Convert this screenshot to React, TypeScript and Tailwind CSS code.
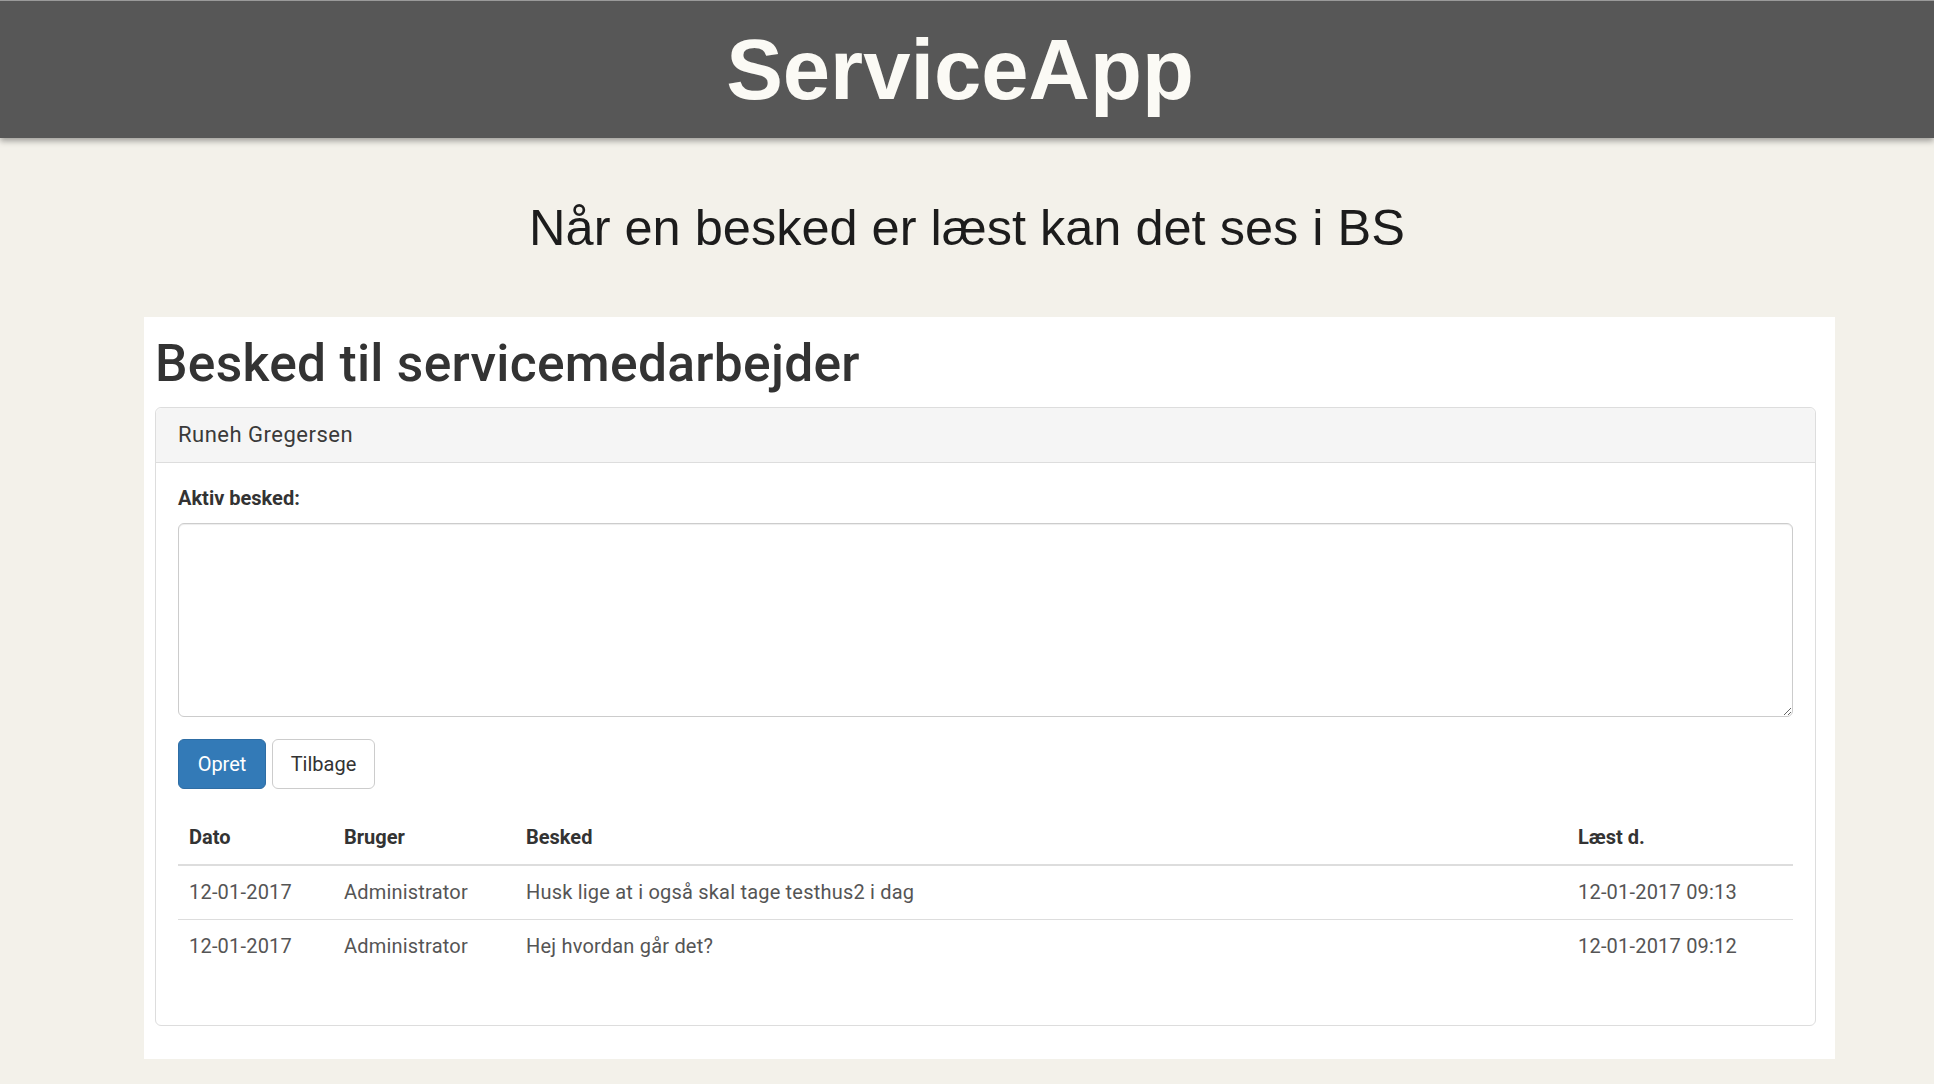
import React from 'react';

interface Message {
  date: string;
  user: string;
  text: string;
  readAt: string;
}

const messages: Message[] = [
  { date: '12-01-2017', user: 'Administrator', text: 'Husk lige at i også skal tage testhus2 i dag', readAt: '12-01-2017 09:13' },
  { date: '12-01-2017', user: 'Administrator', text: 'Hej hvordan går det?', readAt: '12-01-2017 09:12' },
];

export default function App() {
  return (
    <div className="min-h-[1084px] bg-[#f3f1ea] pb-[26px]">
      {/* Top bar */}
      <header className="relative z-10 flex h-[138px] items-center justify-center border-t border-[#9a9a9a] bg-[#575757] pr-[14px] shadow-[0_3px_6px_rgba(0,0,0,0.35)]">
        <span className="font-['Liberation_Sans',Arial,sans-serif] text-[85px] leading-none font-bold text-[#fbfaf5]">
          ServiceApp
        </span>
      </header>

      {/* Slide caption */}
      <p className="mt-[65px] text-center font-['Liberation_Sans',Arial,sans-serif] text-[50.5px] leading-none text-[#1c1c1c]">
        Når en besked er læst kan det ses i BS
      </p>

      {/* Screenshot of the page */}
      <div className="mt-[63px] ml-[144px] w-[1691px] bg-white pt-[19px] pr-[19px] pb-[33px] pl-[11px] font-['Roboto',sans-serif] text-[20px] leading-[28px] text-[#333]">
        <h1 className="text-[51.5px] leading-[56px] font-medium tracking-[0.3px] text-[#333]">Besked til servicemedarbejder</h1>

        <div className="mt-[15px] rounded-[6px] border border-[#ddd]">
          <div className="h-[55px] rounded-t-[6px] border-b border-[#ddd] bg-[#f5f5f5] px-[22px] pt-[13px] text-[22px] tracking-[0.5px] text-[#3a3a3a]">
            Runeh Gregersen
          </div>

          <div className="px-[22px] pt-[21px] pb-[52px]">
            <label className="block font-bold">Aktiv besked:</label>
            <textarea
              className="mt-[11px] block h-[194px] w-full resize-y rounded-[6px] border border-[#ccc] bg-white shadow-[inset_0_1px_1px_rgba(0,0,0,0.075)] outline-none"
            />

            <div className="mt-[22px] flex gap-[6px]">
              <button
                type="button"
                className="h-[50px] w-[88px] rounded-[6px] border border-[#2e6da4] bg-[#337ab7] text-white"
              >
                Opret
              </button>
              <button
                type="button"
                className="h-[50px] w-[103px] rounded-[6px] border border-[#ccc] bg-white text-[#333]"
              >
                Tilbage
              </button>
            </div>

            <table className="mt-[21px] w-full border-collapse text-left">
              <thead>
                <tr className="border-b-2 border-[#ddd]">
                  <th className="w-[155px] px-[11px] py-[13px] font-bold">Dato</th>
                  <th className="w-[182px] px-[11px] py-[13px] font-bold">Bruger</th>
                  <th className="px-[11px] py-[13px] font-bold">Besked</th>
                  <th className="w-[226px] px-[11px] py-[13px] font-bold">Læst d.</th>
                </tr>
              </thead>
              <tbody className="tracking-[0.2px] text-[#555]">
                {messages.map((m, i) => (
                  <tr key={i} className={i > 0 ? 'border-t border-[#ddd]' : ''}>
                    <td className="px-[11px] py-[12.5px]">{m.date}</td>
                    <td className="px-[11px] py-[12.5px]">{m.user}</td>
                    <td className="px-[11px] py-[12.5px]">{m.text}</td>
                    <td className="px-[11px] py-[12.5px]">{m.readAt}</td>
                  </tr>
                ))}
              </tbody>
            </table>
          </div>
        </div>
      </div>
    </div>
  );
}
